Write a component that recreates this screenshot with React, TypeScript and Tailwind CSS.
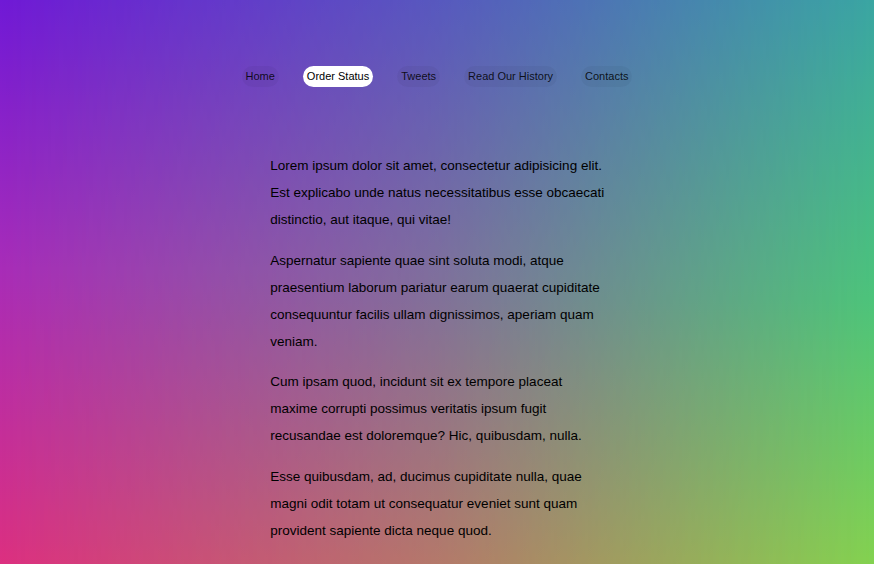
const links = ["Home", "Order Status", "Tweets", "Read Our History", "Contacts"];

const paragraphs = [
  "Lorem ipsum dolor sit amet, consectetur adipisicing elit. Est explicabo unde natus necessitatibus esse obcaecati distinctio, aut itaque, qui vitae!",
  "Aspernatur sapiente quae sint soluta modi, atque praesentium laborum pariatur earum quaerat cupiditate consequuntur facilis ullam dignissimos, aperiam quam veniam.",
  "Cum ipsam quod, incidunt sit ex tempore placeat maxime corrupti possimus veritatis ipsum fugit recusandae est doloremque? Hic, quibusdam, nulla.",
  "Esse quibusdam, ad, ducimus cupiditate nulla, quae magni odit totam ut consequatur eveniet sunt quam provident sapiente dicta neque quod.",
];

export default function App() {
  return (
    <div className="relative min-h-screen overflow-hidden bg-[linear-gradient(to_bottom,#7019d6_0%,#a82cb8_45%,#e2307a_100%)] font-['Liberation_Sans',Arial,sans-serif]">
      {/* right-hand colours, faded in from the left */}
      <div className="absolute inset-0 bg-[linear-gradient(to_bottom,#3aa6a2_0%,#4cc47a_50%,#8ad44a_100%)] [mask-image:linear-gradient(to_right,transparent_0%,rgba(0,0,0,0.45)_50%,black_100%)]" />

      <div className="relative">
        <nav className="flex justify-center gap-6 pt-[66px]">
          {links.map((link) => (
            <a
              key={link}
              href="#"
              className={`rounded-full px-1 py-1 text-[11px] leading-[13px] ${
                link === "Order Status"
                  ? "bg-white text-black"
                  : "bg-black/[0.04] text-black/85"
              }`}
            >
              {link}
            </a>
          ))}
        </nav>

        <main className="mx-auto mt-[65px] w-[calc(25em+4px)] pl-1 pb-10 text-[13.5px] leading-[2] text-black">
          {paragraphs.map((p, i) => (
            <p key={i} className="mb-[1em]">
              {p}
            </p>
          ))}
        </main>
      </div>
    </div>
  );
}
